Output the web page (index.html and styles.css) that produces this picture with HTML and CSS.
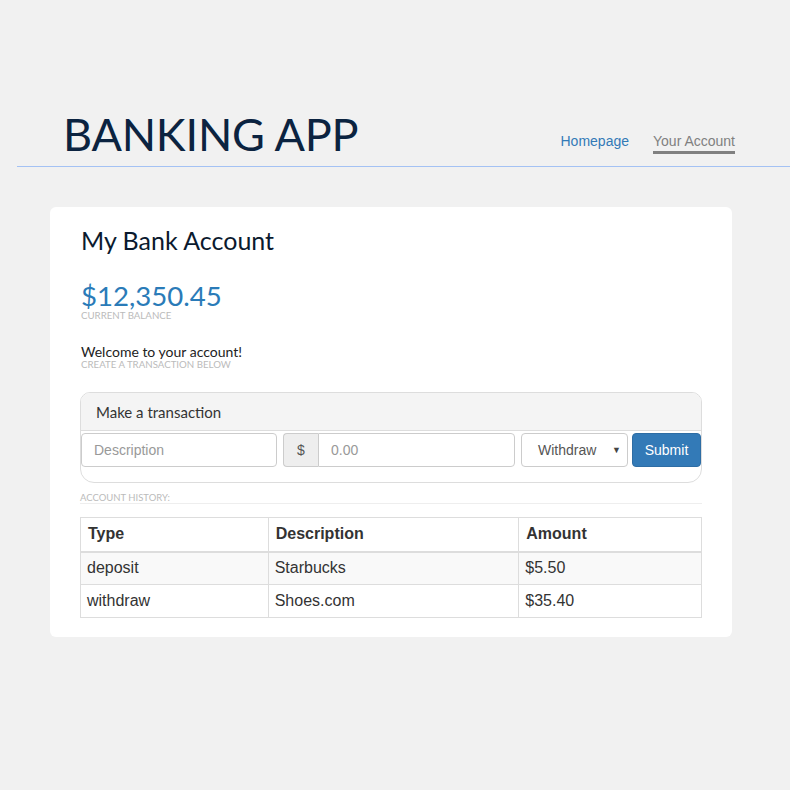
FILE: index.html
```html
<!DOCTYPE html>
<html>
<head>
<meta charset="utf-8">
<link rel="stylesheet" href="styles.css">
</head>
<body>
<header class="topbar">
  <h1 class="brand">BANKING APP</h1>
  <nav class="nav">
    <a class="nav-link">Homepage</a>
    <a class="nav-link active">Your Account</a>
  </nav>
</header>
<main class="card">
  <h2 class="card-title">My Bank Account</h2>
  <div class="balance">$12,350.45</div>
  <div class="caption">CURRENT BALANCE</div>
  <p class="welcome">Welcome to your account!</p>
  <div class="caption">CREATE A TRANSACTION BELOW</div>
  <section class="panel">
    <div class="panel-head">Make a transaction</div>
    <form class="tx-form">
      <input class="field desc" placeholder="Description">
      <div class="amount-group">
        <span class="addon">$</span>
        <input class="field amount" placeholder="0.00">
      </div>
      <div class="select-box"><span>Withdraw</span><span class="caret">&#9660;</span></div>
      <button class="btn" type="button">Submit</button>
    </form>
  </section>
  <div class="history-label">ACCOUNT HISTORY:</div>
  <table class="history">
    <colgroup><col class="c1"><col class="c2"><col class="c3"></colgroup>
    <thead><tr><th>Type</th><th>Description</th><th>Amount</th></tr></thead>
    <tbody>
      <tr class="odd"><td>deposit</td><td>Starbucks</td><td>$5.50</td></tr>
      <tr><td>withdraw</td><td>Shoes.com</td><td>$35.40</td></tr>
    </tbody>
  </table>
</main>
</body>
</html>
```
FILE: styles.css
```css
* { box-sizing: border-box; }
html, body { margin: 0; padding: 0; }
body {
  background: #f1f1f1;
  font-family: "Liberation Sans", Arial, sans-serif;
  color: #333;
  width: 790px;
  overflow: hidden;
}
.topbar {
  margin-left: 17px;
  height: 167px;
  border-bottom: 1px solid #a4c2f4;
  display: flex;
  align-items: flex-end;
  justify-content: space-between;
  padding: 0 55px 12px 46px;
}
.brand {
  margin: 0;
  font-family: Lato, sans-serif;
  font-weight: 400;
  font-size: 45px;
  line-height: 45px;
  color: #0b2340;
  letter-spacing: -0.2px;
  margin-bottom: -3px;
}
.nav { display: flex; gap: 24px; }
.nav-link {
  font-size: 14px;
  color: #337ab7;
  padding-bottom: 1px;
  border-bottom: 3px solid transparent;
  line-height: 17px;
}
.nav-link.active { color: #808080; border-bottom-color: #808080; }
.card {
  margin: 40px 0 0 50px;
  width: 682px;
  background: #fff;
  border-radius: 6px;
  padding: 18px 30px 19px 30px;
}
.card-title {
  margin: 0;
  font-family: Lato, sans-serif;
  font-weight: 400;
  font-size: 25px;
  line-height: 30px;
  color: #0b1a2e;
  padding-left: 1px;
}
.balance {
  margin-top: 27px;
  font-family: Lato, sans-serif;
  font-size: 27.6px;
  line-height: 28px;
  color: #2a7bb8;
  padding-left: 1px;
}
.caption {
  font-family: Lato, sans-serif;
  font-size: 9.7px;
  line-height: 10px;
  color: #bbb;
  padding-left: 1px;
}
.welcome {
  margin: 24px 0 0 0;
  font-family: Lato, sans-serif;
  font-size: 14px;
  line-height: 15px;
  color: #222;
  padding-left: 1px;
}
.panel {
  margin-top: 23px;
  border: 1px solid #ddd;
  border-radius: 10px 10px 14px 14px;
  height: 91px;
  overflow: hidden;
}
.panel-head {
  background: #f4f4f4;
  border-bottom: 1px solid #ddd;
  height: 38px;
  padding: 10px 15px;
  font-family: Lato, sans-serif;
  font-size: 15px;
  line-height: 18px;
  color: #333;
}
.tx-form {
  display: flex;
  margin-top: 2px;
  height: 34px;
}
.field {
  height: 34px;
  border: 1px solid #ccc;
  border-radius: 4px;
  padding: 6px 12px;
  font-family: "Liberation Sans", Arial, sans-serif;
  font-size: 14px;
  color: #555;
  background: #fff;
}
.field::placeholder { color: #999; }
.desc { width: 196px; }
.amount-group { display: flex; margin-left: 6px; }
.addon {
  width: 35px;
  height: 34px;
  background: #eee;
  border: 1px solid #ccc;
  border-right: none;
  border-radius: 4px 0 0 4px;
  font-size: 14px;
  color: #555;
  display: flex;
  align-items: center;
  justify-content: center;
}
.amount { width: 197px; border-radius: 0 4px 4px 0; }
.select-box {
  margin-left: 6px;
  width: 107px;
  height: 34px;
  border: 1px solid #ccc;
  border-radius: 4px;
  display: flex;
  align-items: center;
  justify-content: space-between;
  padding: 0 6px 0 16px;
  font-size: 14px;
  color: #555;
}
.caret { font-size: 9px; color: #444; }
.btn {
  margin-left: 4px;
  width: 69px;
  height: 34px;
  background: #337ab7;
  border: 1px solid #2e6da4;
  border-radius: 4px;
  color: #fff;
  font-family: "Liberation Sans", Arial, sans-serif;
  font-size: 14px;
  padding: 0;
}
.history-label {
  margin-top: 10px;
  font-family: Lato, sans-serif;
  font-size: 9.5px;
  line-height: 10px;
  color: #bbb;
  border-bottom: 1px solid #eee;
  padding-bottom: 0;
}
.history {
  margin-top: 13px;
  width: 622px;
  border-collapse: collapse;
  font-size: 16px;
  color: #333;
}
.c1 { width: 188px; }
.c2 { width: 251px; }
.c3 { width: 183px; }
.history th, .history td {
  border: 1px solid #ddd;
  padding: 0 6px;
  height: 33px;
  text-align: left;
}
.history th { font-weight: 700; height: 34px; border-bottom-width: 2px; padding-left: 7px; }
.history tr.odd td { background: #f9f9f9; }
```
